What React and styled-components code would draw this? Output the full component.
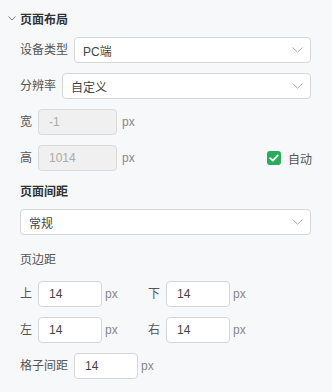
import React from "react";
import styled, { createGlobalStyle } from "styled-components";

const Global = createGlobalStyle`
  html, body { margin: 0; padding: 0; background: #f7f8fa; }
  body { font-family: "Liberation Sans", "Noto Sans CJK SC", sans-serif; font-size: 12px; color: #555; }
  * { box-sizing: border-box; }
`;

const Panel = styled.div`
  width: 332px;
  height: 392px;
  background: #f7f8fa;
  padding: 0 21px 0 20px;
  display: flex;
  flex-direction: column;
`;

const Header = styled.div`
  height: 37px;
  display: flex;
  align-items: center;
  margin-left: -12px;
  gap: 4px;
  font-weight: bold;
  color: #333;
  font-size: 12px;
`;

const Row = styled.div`
  height: 26px;
  display: flex;
  align-items: center;
  margin-bottom: ${(p) => p.$mb ?? 10}px;
`;

const Label = styled.span`
  color: #555;
  white-space: nowrap;
  margin-right: 6px;
  line-height: 1;
`;

const SelectBox = styled.div`
  flex: 1;
  height: 26px;
  background: #fff;
  border: 1px solid #d6d6d6;
  border-radius: 4px;
  display: flex;
  align-items: center;
  justify-content: space-between;
  padding: 0 7px 0 8px;
  color: #444;
`;

const Input = styled.div`
  width: ${(p) => p.$w}px;
  height: 26px;
  background: ${(p) => (p.$disabled ? "#f0f0f0" : "#fff")};
  border: 1px solid ${(p) => (p.$disabled ? "#dadada" : "#d6d6d6")};
  border-radius: 4px;
  display: flex;
  align-items: center;
  padding-left: 10px;
  color: ${(p) => (p.$disabled ? "#aaa" : "#444")};
`;

const Unit = styled.span`
  color: #888;
  margin-left: ${(p) => p.$ml ?? 3}px;
`;

const Spacer = styled.div`
  flex: 1;
`;

const Check = styled.span`
  display: inline-flex;
  align-items: center;
  gap: 7px;
  margin-right: -1px;
  color: #555;
`;

const Box = styled.span`
  width: 14px;
  height: 14px;
  border-radius: 3px;
  background: #2aaa5b;
  display: inline-flex;
  align-items: center;
  justify-content: center;
`;

const SubTitle = styled.div`
  height: ${(p) => p.$h}px;
  display: flex;
  align-items: center;
  font-weight: ${(p) => (p.$bold ? "bold" : "normal")};
  color: ${(p) => (p.$bold ? "#333" : "#555")};
`;

const Half = styled.div`
  width: 128px;
  display: flex;
  align-items: center;
`;

const Chevron = () => (
  <svg width="11" height="6" viewBox="0 0 11 6" fill="none">
    <path d="M0.5 0.5 L5.5 5.2 L10.5 0.5" stroke="#b0b0b0" strokeWidth="1" />
  </svg>
);

const Select = ({ value }) => (
  <SelectBox>
    <span>{value}</span>
    <Chevron />
  </SelectBox>
);

const Field = ({ label, value }) => (
  <Half>
    <Label>{label}</Label>
    <Input $w={64}>{value}</Input>
    <Unit>px</Unit>
  </Half>
);

export default function App() {
  return (
    <Panel>
      <Global />
      <Header>
        <svg width="8" height="5" viewBox="0 0 8 5" fill="none">
          <path d="M0.5 0.5 L4 4 L7.5 0.5" stroke="#777" strokeWidth="1" />
        </svg>
        <span>页面布局</span>
      </Header>
      <Row>
        <Label>设备类型</Label>
        <Select value="PC端" />
      </Row>
      <Row>
        <Label>分辨率</Label>
        <Select value="自定义" />
      </Row>
      <Row>
        <Label>宽</Label>
        <Input $w={79} $disabled>-1</Input>
        <Unit $ml={5}>px</Unit>
      </Row>
      <Row $mb={0}>
        <Label>高</Label>
        <Input $w={79} $disabled>1014</Input>
        <Unit $ml={5}>px</Unit>
        <Spacer />
        <Check>
          <Box>
            <svg width="10" height="8" viewBox="0 0 10 8" fill="none">
              <path d="M1.2 4.2 L3.8 6.6 L8.8 1.4" stroke="#fff" strokeWidth="1.8" strokeLinecap="round" strokeLinejoin="round" />
            </svg>
          </Box>
          自动
        </Check>
      </Row>
      <SubTitle $h={38} $bold>页面间距</SubTitle>
      <Row $mb={0}>
        <Select value="常规" />
      </Row>
      <SubTitle $h={46}>页边距</SubTitle>
      <Row>
        <Field label="上" value="14" />
        <Field label="下" value="14" />
      </Row>
      <Row>
        <Field label="左" value="14" />
        <Field label="右" value="14" />
      </Row>
      <Row>
        <Label>格子间距</Label>
        <Input $w={64}>14</Input>
        <Unit>px</Unit>
      </Row>
    </Panel>
  );
}
